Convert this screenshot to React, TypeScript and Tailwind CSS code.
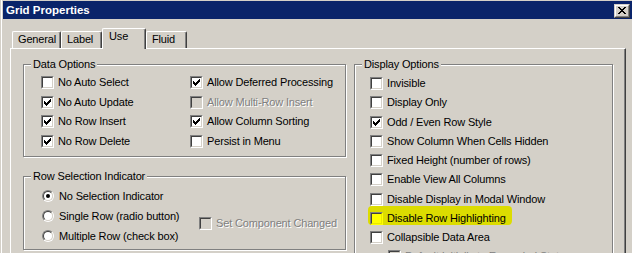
import clsx from "clsx";

const CHECK: [number, number, number][] = [
  [6, 0, 1],
  [5, 1, 2],
  [0, 2, 1],
  [4, 2, 3],
  [0, 3, 2],
  [3, 3, 3],
  [0, 4, 5],
  [1, 5, 3],
  [2, 6, 1],
];

const CLOSE: [number, number, number][] = [
  [0, 0, 2],
  [6, 0, 2],
  [1, 1, 2],
  [5, 1, 2],
  [2, 2, 4],
  [3, 3, 2],
  [2, 4, 4],
  [1, 5, 2],
  [5, 5, 2],
  [0, 6, 2],
  [6, 6, 2],
];

function PixelGlyph({
  rows,
  w,
  h,
  color,
}: {
  rows: [number, number, number][];
  w: number;
  h: number;
  color: string;
}) {
  return (
    <svg width={w} height={h} viewBox={`0 0 ${w} ${h}`} shapeRendering="crispEdges">
      {rows.map(([x, y, len], i) => (
        <rect key={i} x={x} y={y} width={len} height={1} fill={color} />
      ))}
    </svg>
  );
}

function Box({
  checked,
  disabled,
  highlight,
}: {
  checked?: boolean;
  disabled?: boolean;
  highlight?: boolean;
}) {
  return (
    <div
      className={clsx(
        "w-[13px] h-[13px] shrink-0 border border-t-[#808080] border-l-[#808080]",
        highlight ? "border-r-[#ffff00] border-b-[#ffff00]" : "border-r-white border-b-white"
      )}
    >
      <div
        className={clsx(
          "w-full h-full border border-t-[#404040] border-l-[#404040] flex items-center justify-center",
          highlight ? "border-r-[#e8e800] border-b-[#e8e800]" : "border-r-[#d4d0c8] border-b-[#d4d0c8]",
          disabled ? "bg-[#d4d0c8]" : highlight ? "bg-[#ffff00]" : "bg-white"
        )}
      >
        {checked && <PixelGlyph rows={CHECK} w={7} h={7} color={disabled ? "#808080" : "#000"} />}
      </div>
    </div>
  );
}

function Check({
  label,
  checked,
  disabled,
  className,
}: {
  label: string;
  checked?: boolean;
  disabled?: boolean;
  className?: string;
}) {
  return (
    <div className={clsx("flex items-center gap-[4px] whitespace-nowrap", className)}>
      <Box checked={checked} disabled={disabled} />
      <span
        className={clsx(
          "leading-[13px]",
          disabled && "text-[#808080] [text-shadow:1px_1px_0_#fff]"
        )}
      >
        {label}
      </span>
    </div>
  );
}

function Radio({ label, checked }: { label: string; checked?: boolean }) {
  return (
    <div className="flex items-center gap-[5px] h-[20px] whitespace-nowrap">
      <div className="w-[12px] h-[12px] shrink-0 rounded-full border border-t-[#808080] border-l-[#808080] border-r-white border-b-white">
        <div className="w-full h-full rounded-full border border-t-[#404040] border-l-[#404040] border-r-[#d4d0c8] border-b-[#d4d0c8] bg-white flex items-center justify-center">
          {checked && <div className="w-[4px] h-[4px] rounded-full bg-black" />}
        </div>
      </div>
      <span className="leading-[13px]">{label}</span>
    </div>
  );
}

function Group({
  title,
  className,
  children,
}: {
  title: string;
  className?: string;
  children: React.ReactNode;
}) {
  return (
    <div
      className={clsx(
        "relative border border-[#808080] shadow-[inset_1px_1px_0_#fff,1px_1px_0_#fff]",
        className
      )}
    >
      <span className="absolute left-[7px] -top-[7px] px-[2px] bg-[#d4d0c8] leading-[13px] whitespace-nowrap">
        {title}
      </span>
      {children}
    </div>
  );
}

function Tab({ label, width, active }: { label: string; width: number; active?: boolean }) {
  return (
    <div
      style={{ width }}
      className={clsx(
        "relative border-t border-l border-white border-r border-r-[#404040] shadow-[inset_-1px_0_0_#808080] rounded-t-[2px] bg-[#d4d0c8] leading-[13px] pt-[1px] whitespace-nowrap",
        active ? "h-[21px] -mb-[1px] z-10 pl-[6px]" : "h-[17px] pl-[5px]"
      )}
    >
      {label}
    </div>
  );
}

export default function App() {
  return (
    <div className="w-[632px] h-[253px] overflow-hidden bg-[#d4d0c8] pt-[1px] pl-[3px] flex flex-col text-[11px] tracking-[-0.15px] text-black font-['Liberation_Sans',Arial,sans-serif] shadow-[inset_1px_0_0_#d4d0c8,inset_2px_0_0_#fff]">
      {/* title bar */}
      <div className="h-[18px] shrink-0 bg-[#0a246a] flex items-center justify-between pl-[3px] pr-[2px]">
        <span className="text-white font-bold text-[11.5px] leading-[14px] tracking-normal">Grid Properties</span>
        <div className="w-[16px] h-[14px] mt-[1px] border border-t-[#d4d0c8] border-l-[#d4d0c8] border-r-[#404040] border-b-[#404040] bg-[#d4d0c8]">
          <div className="w-full h-full border border-t-white border-l-white border-r-[#808080] border-b-[#808080] flex items-center justify-center">
            <PixelGlyph rows={CLOSE} w={8} h={7} color="#000" />
          </div>
        </div>
      </div>

      <div className="pl-[7px] mt-[9px] flex flex-col flex-1 min-h-0">
        {/* tabs */}
        <div className="flex items-end h-[20px] pl-[2px] shrink-0 relative z-10">
          <Tab label="General" width={49} />
          <Tab label="Label" width={41} />
          <Tab label="Use" width={44} active />
          <Tab label="Fluid" width={41} />
        </div>

        {/* panel */}
        <div className="flex-1 w-[616px] border-t border-l border-white border-r border-r-[#404040] shadow-[inset_-1px_0_0_#808080] flex pt-[15px] pl-[12px] overflow-hidden">
          <div className="w-[323px] flex flex-col shrink-0">
            <Group title="Data Options" className="pt-[8px] pb-[5px] pl-[17px]">
              <div className="grid grid-cols-[149px_1fr]">
                <div className="flex flex-col">
                  <Check className="h-[19.5px]" label="No Auto Select" />
                  <Check className="h-[19.5px]" label="No Auto Update" checked />
                  <Check className="h-[19.5px]" label="No Row Insert" checked />
                  <Check className="h-[19.5px]" label="No Row Delete" checked />
                </div>
                <div className="flex flex-col">
                  <Check className="h-[19.5px]" label="Allow Deferred Processing" checked />
                  <Check className="h-[19.5px]" label="Allow Multi-Row Insert" disabled />
                  <Check className="h-[19.5px]" label="Allow Column Sorting" checked />
                  <Check className="h-[19.5px]" label="Persist in Menu" />
                </div>
              </div>
            </Group>

            <Group title="Row Selection Indicator" className="mt-[19px] pt-[9px] pb-[3px] pl-[18px]">
              <div className="flex">
                <div className="w-[157px] flex flex-col">
                  <Radio label="No Selection Indicator" checked />
                  <Radio label="Single Row (radio button)" />
                  <Radio label="Multiple Row (check box)" />
                </div>
                <Check className="h-[19px] mt-[28px]" label="Set Component Changed" disabled />
              </div>
            </Group>
          </div>

          <Group title="Display Options" className="ml-[8px] w-[259px] h-[250px] shrink-0 pt-[9px] pl-[15px]">
            <div className="flex flex-col">
              <Check className="h-[19.25px]" label="Invisible" />
              <Check className="h-[19.25px]" label="Display Only" />
              <Check className="h-[19.25px]" label="Odd / Even Row Style" checked />
              <Check className="h-[19.25px]" label="Show Column When Cells Hidden" />
              <Check className="h-[19.25px]" label="Fixed Height (number of rows)" />
              <Check className="h-[19.25px]" label="Enable View All Columns" />
              <Check className="h-[19.25px]" label="Disable Display in Modal Window" />
              <div className="relative flex items-center gap-[4px] h-[19.25px] whitespace-nowrap">
                <span className="absolute -left-[2px] -top-[3px] w-[144px] h-[19px] rounded-[4px] bg-[#dcdc00]" />
                <div className="relative">
                  <Box highlight />
                </div>
                <span className="relative leading-[13px]">Disable Row Highlighting</span>
              </div>
              <Check className="h-[19.25px]" label="Collapsible Data Area" />
              <Check className="h-[19.25px] ml-[18px]" label="Default Initially to Expanded State" disabled />
            </div>
          </Group>
        </div>
      </div>
    </div>
  );
}
